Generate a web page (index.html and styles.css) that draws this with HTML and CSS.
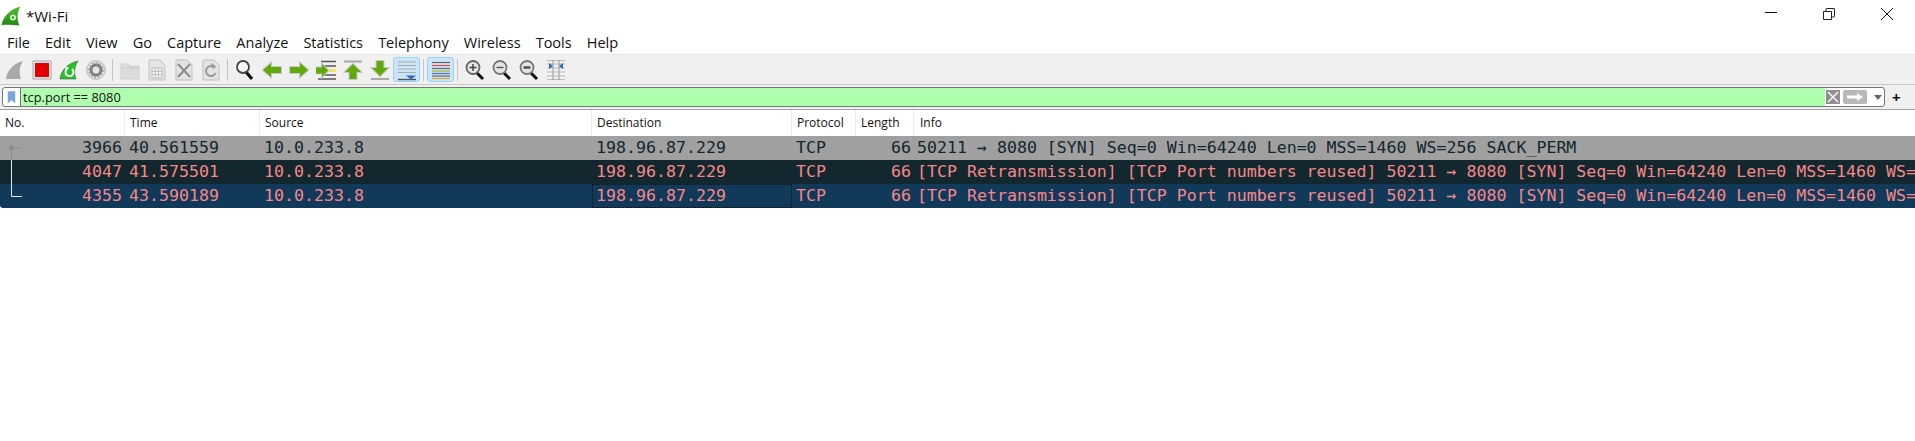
FILE: index.html
```html
<!doctype html>
<html>
<head>
	<meta charset="utf-8">
	<title>*Wi-Fi</title>
	<link rel="stylesheet" href="styles.css">
</head>
<body>
	<div class="titlebar">
		<svg class="appicon" viewBox="0 0 20 20">
			<defs>
				<linearGradient id="fin" x1="0" y1="0" x2="0" y2="1">
					<stop offset="0" stop-color="#55c030"/>
					<stop offset="1" stop-color="#1f8a0c"/>
				</linearGradient>
			</defs>
			<path d="M0.5 19 C2 11 9 3 19.5 0.5 C16 6 15.5 13 18.5 19.5 C12 18.5 6 18.5 0.5 19 Z" fill="url(#fin)"/>
			<circle cx="12" cy="11.5" r="3" fill="#d8f0d0"/>
			<circle cx="12" cy="11.5" r="1.2" fill="#2f9e12"/>
		</svg>
		<span class="wintitle">*Wi-Fi</span>
		<div class="winbtns">
			<svg viewBox="0 0 14 14"><path d="M1 5.5 H13" stroke="#111" fill="none"/></svg>
			<svg viewBox="0 0 14 14"><path d="M1.5 4.5 H9.5 V12.5 H1.5 Z M4 4.5 V2 Q4 1.5 4.5 1.5 H12 Q12.5 1.5 12.5 2 V9.5 Q12.5 10 12 10 H9.5" stroke="#222" fill="none"/></svg>
			<svg viewBox="0 0 14 14"><path d="M1 1 L13 13 M13 1 L1 13" stroke="#111" fill="none"/></svg>
		</div>
	</div>

	<div class="menubar">
		<span>File</span>
		<span>Edit</span>
		<span>View</span>
		<span>Go</span>
		<span>Capture</span>
		<span>Analyze</span>
		<span>Statistics</span>
		<span>Telephony</span>
		<span>Wireless</span>
		<span>Tools</span>
		<span>Help</span>
	</div>

	<div class="toolbar">
		<div class="tool"><svg viewBox="0 0 20 22"><path d="M1 20 C2 11 9 4 18 2 C14 8 14 14 16 20 Z" fill="#a9a9a9"/></svg></div>
		<div class="tool"><svg viewBox="0 0 20 22"><rect x="1" y="2" width="18" height="18" fill="#e8e8e8" stroke="#a8a8a8"/><rect x="3" y="4" width="14" height="14" fill="#e40000"/></svg></div>
		<div class="tool"><svg viewBox="0 0 20 22"><path d="M1 20 C2 11 9 4 19 2 C15 8 15 14 17 20 Z" fill="#22c522" stroke="#555" stroke-width=".6"/><path d="M13 10 A4 4 0 1 1 8 10" fill="none" stroke="#fff" stroke-width="2"/><path d="M6 7 L10 9 L7 12 Z" fill="#fff"/></svg></div>
		<div class="tool"><svg viewBox="0 0 20 22"><circle cx="10" cy="11" r="9.3" fill="#e6e6e6" stroke="#b0b0b0"/><circle cx="10" cy="11" r="5" fill="none" stroke="#808080" stroke-width="3"/><circle cx="10" cy="11" r="7" fill="none" stroke="#999" stroke-width="1.4" stroke-dasharray="2 1.6"/></svg></div>
		<i class="sep"></i>
		<div class="tool"><svg viewBox="0 0 20 22"><path d="M1 5 H8 L10 7 H19 V20 H1 Z" fill="#dcdcdc" stroke="#cfcfcf"/><path d="M1 9 H19" stroke="#c8c8c8"/></svg></div>
		<div class="tool"><svg viewBox="0 0 20 22"><path d="M2 1 H13 L18 6 V21 H2 Z" fill="#e4e4e4" stroke="#c4c4c4"/><path d="M5 9 H15 V19 H5 Z M5 12.3 H15 M5 15.6 H15 M8.3 9 V19 M11.6 9 V19" fill="#f4f4f4" stroke="#bbb"/></svg></div>
		<div class="tool"><svg viewBox="0 0 20 22"><path d="M2 1 H13 L18 6 V21 H2 Z" fill="#e4e4e4" stroke="#bdbdbd"/><path d="M4 5 L16 18 M16 5 L4 18" stroke="#8e8e8e" stroke-width="2.2"/></svg></div>
		<div class="tool"><svg viewBox="0 0 20 22"><path d="M2 1 H13 L18 6 V21 H2 Z" fill="#e4e4e4" stroke="#c0c0c0"/><path d="M14 9 A5 5 0 1 0 14.5 14" fill="none" stroke="#9a9a9a" stroke-width="2"/><path d="M10 4 L15 7 L11 10 Z" fill="#9a9a9a"/></svg></div>
		<i class="sep"></i>
		<div class="tool"><svg viewBox="0 0 20 22"><path d="M11 13 L17 20" stroke="#111" stroke-width="3.2"/><circle cx="8" cy="8" r="6" fill="#f2f6f6" stroke="#444" stroke-width="1.8"/></svg></div>
		<div class="tool"><svg viewBox="0 0 20 22"><path class="arrow" d="M1 11 L9 4 V8 H19 V14 H9 V18 Z"/></svg></div>
		<div class="tool"><svg viewBox="0 0 20 22"><path class="arrow" d="M19 11 L11 4 V8 H1 V14 H11 V18 Z"/></svg></div>
		<div class="tool"><svg viewBox="0 0 20 22"><path d="M5 2.5 H20 M8 7 H20 M8 16 H20 M2 20 H20" stroke="#555" stroke-width="1.6"/><rect x="11" y="10" width="9" height="3" fill="#f5e56b"/><path class="arrow" d="M12 11.5 L6 5 V8.5 H0 V14.5 H6 V18 Z"/></svg></div>
		<div class="tool"><svg viewBox="0 0 20 22"><path d="M1 2.5 H19" stroke="#a8a8a8" stroke-width="2"/><path class="arrow" d="M10 5 L18 13 H13.5 V20 H6.5 V13 H2 Z"/></svg></div>
		<div class="tool"><svg viewBox="0 0 20 22"><path d="M1 20 H19" stroke="#a8a8a8" stroke-width="2"/><path class="arrow" d="M10 17 L18 9 H13.5 V2 H6.5 V9 H2 Z"/></svg></div>
		<div class="tool on"><svg viewBox="0 0 20 22"><path d="M1 3 H19 M1 6.5 H19 M1 10 H19 M1 13.5 H19" stroke="#aaa" stroke-width="1.2"/><path d="M1 20.5 H19" stroke="#555" stroke-width="1.4"/><path d="M9 16.5 H19 L14 20.5 Z" fill="#2f6cb5"/></svg></div>
		<i class="sep"></i>
		<div class="tool on"><svg viewBox="0 0 20 22"><path d="M1 3.5 H19" stroke="#666" stroke-width="1.2"/><path d="M1 6.5 H19" stroke="#e04a4a" stroke-width="1.2"/><path d="M1 9.5 H19" stroke="#666" stroke-width="1.2"/><path d="M1 12 H19" stroke="#9ab832" stroke-width="1.2"/><path d="M1 14.5 H19" stroke="#5a6fc0" stroke-width="1.2"/><path d="M1 17 H19" stroke="#666" stroke-width="1.2"/><path d="M1 19.5 H19" stroke="#d8b030" stroke-width="1.2"/></svg></div>
		<i class="sep"></i>
		<div class="tool"><svg viewBox="0 0 20 22"><path d="M12 14 L18 20" stroke="#111" stroke-width="3"/><circle cx="8" cy="8.5" r="6.5" fill="#e6e6e6" stroke="#666" stroke-width="1.8"/><path d="M4.5 8.5 H11.5 M8 5 V12" stroke="#444" stroke-width="1.5"/></svg></div>
		<div class="tool"><svg viewBox="0 0 20 22"><path d="M12 14 L18 20" stroke="#111" stroke-width="3"/><circle cx="8" cy="8.5" r="6.5" fill="#e6e6e6" stroke="#777" stroke-width="1.8"/><path d="M4.5 8.5 H11.5" stroke="#555" stroke-width="1.5"/></svg></div>
		<div class="tool"><svg viewBox="0 0 20 22"><path d="M12 14 L18 20" stroke="#111" stroke-width="3"/><circle cx="8" cy="8.5" r="6.5" fill="#e6e6e6" stroke="#777" stroke-width="1.8"/><path d="M4.5 8.5 H11.5" stroke="#555" stroke-width="2.6"/></svg></div>
		<div class="tool"><svg viewBox="0 0 20 22"><path d="M1 1.5 H19 M1 20.5 H19 M1 5 H19 M1 9 H19 M1 13 H19 M1 17 H19" stroke="#bbb" stroke-width="1.1"/><path d="M7 1 V21 M13 1 V21" stroke="#999"/><path d="M3 4 L7 7 L3 10 Z M17 4 L13 7 L17 10 Z" fill="#2f6cb5"/></svg></div>
	</div>

	<div class="filterrow">
		<div class="filter">
			<div class="bookmark"><svg viewBox="0 0 12 17"><path d="M1 0 H11 V16 L6 12 L1 16 Z" fill="#7aa5db"/></svg></div>
			<div class="expr">tcp.port == 8080</div>
			<div class="filterbtns">
				<svg class="clear" viewBox="0 0 14 14"><rect width="14" height="14" fill="#909090"/><path d="M2 2 L12 12 M12 2 L2 12" stroke="#fff" stroke-width="1.4"/></svg>
				<svg class="apply" viewBox="0 0 24 14"><rect width="24" height="14" rx="2" fill="#b8b8b8"/><path d="M4 5.5 H14 V3 L20 7 L14 11 V8.5 H4 Z" fill="#fff"/></svg>
				<svg class="drop" viewBox="0 0 8 5"><path d="M0 0 H8 L4 5 Z" fill="#666"/></svg>
			</div>
		</div>
		<span class="plus">+</span>
	</div>

	<div class="head cols">
		<div>No.</div>
		<div>Time</div>
		<div>Source</div>
		<div>Destination</div>
		<div>Protocol</div>
		<div>Length</div>
		<div class="info">Info</div>
	</div>

	<div class="packets">
		<svg class="related" viewBox="0 0 24 72">
			<path d="M11.5 24 V60.5 H22" fill="none" stroke="#e8e8e8"/>
			<path d="M11.5 24 V12 H22" fill="none" stroke="#8c8c8c"/>
			<circle cx="11.5" cy="12" r="2.5" fill="#8a8a8a"/>
		</svg>
		<div class="row cols first">
			<div class="num">3966</div>
			<div>40.561559</div>
			<div>10.0.233.8</div>
			<div>198.96.87.229</div>
			<div>TCP</div>
			<div class="num">66</div>
			<div class="info">50211 → 8080 [SYN] Seq=0 Win=64240 Len=0 MSS=1460 WS=256 SACK_PERM</div>
		</div>
		<div class="row cols bad">
			<div class="num">4047</div>
			<div>41.575501</div>
			<div>10.0.233.8</div>
			<div>198.96.87.229</div>
			<div>TCP</div>
			<div class="num">66</div>
			<div class="info">[TCP Retransmission] [TCP Port numbers reused] 50211 → 8080 [SYN] Seq=0 Win=64240 Len=0 MSS=1460 WS=256 SACK_PERM</div>
		</div>
		<div class="row cols bad current">
			<div class="num">4355</div>
			<div>43.590189</div>
			<div>10.0.233.8</div>
			<div class="focus">198.96.87.229</div>
			<div>TCP</div>
			<div class="num">66</div>
			<div class="info">[TCP Retransmission] [TCP Port numbers reused] 50211 → 8080 [SYN] Seq=0 Win=64240 Len=0 MSS=1460 WS=256 SACK_PERM</div>
		</div>
	</div>
</body>
</html>
```

FILE: styles.css
```css
html,
body {
	margin: 0;
	height: 100%;
	overflow: hidden;
	background: #fff;
	font-family: "Open Sans", "Liberation Sans", sans-serif;
	color: #111;
}

.titlebar {
	display: flex;
	align-items: center;
	height: 31px;
}

.appicon {
	width: 20px;
	height: 20px;
	margin-left: 1px;
}

.wintitle {
	margin-left: 5px;
	font-size: 15px;
}

.winbtns {
	display: flex;
	margin-left: auto;
	margin-right: 21px;
	gap: 44px;
	margin-top: -3px;
}

.winbtns svg {
	width: 14px;
	height: 14px;
}

.menubar {
	display: flex;
	height: 23px;
	padding-left: 7px;
	gap: 15.1px;
	align-items: center;
	font-size: 14.5px;
	border-bottom: 1px solid #e6e6e6;
}

.toolbar {
	display: flex;
	align-items: center;
	height: 29px;
	padding-left: 1px;
	background: #f0f0f0;
	border-bottom: 1px solid #c8c8c8;
}

.tool {
	display: flex;
	align-items: center;
	justify-content: center;
	box-sizing: border-box;
	width: 27px;
	height: 25px;
}

.tool svg {
	width: 20px;
	height: 22px;
}

.tool .arrow {
	fill: #62aa0c;
	stroke: #c9c9c9;
	stroke-width: 2;
	paint-order: stroke;
}

.tool.on {
	background: #cce4f7;
	border: 1px solid #99d1ff;
	border-radius: 3px;
}

.sep {
	width: 1px;
	height: 22px;
	margin: 0 3px;
	background: #c6c6c6;
}

.filterrow {
	display: flex;
	align-items: flex-start;
	box-sizing: border-box;
	height: 24px;
	padding: 2px 0 0 2px;
	background: #f0f0f0;
}

.filter {
	display: flex;
	box-sizing: border-box;
	width: 1883px;
	height: 20px;
	border: 1px solid #767676;
	border-radius: 3px;
	background: #fff;
	overflow: hidden;
}

.bookmark {
	display: flex;
	align-items: center;
	justify-content: center;
	width: 17px;
	border-right: 1px solid #767676;
}

.bookmark svg {
	width: 9px;
	height: 15px;
}

.expr {
	flex: 1;
	padding-left: 2px;
	background: #afffaf;
	font-size: 12.8px;
	line-height: 18px;
}

.filterbtns {
	display: flex;
	align-items: center;
	width: 59px;
	padding-left: 1px;
	box-sizing: border-box;
}

.clear {
	width: 14px;
	height: 14px;
}

.apply {
	width: 24px;
	height: 14px;
	margin-left: 3px;
}

.drop {
	width: 8px;
	height: 5px;
	margin-left: 7px;
}

.plus {
	margin-left: 7px;
	font-size: 15px;
	line-height: 20px;
	font-weight: 700;
}

.cols {
	display: grid;
	grid-template-columns: 125px 135px 332px 200px 64px 58px 1fr;
}

.head {
	height: 27px;
	border-top: 1px solid #a0a0a0;
	box-sizing: border-box;
	font-size: 12px;
	line-height: 26px;
}

.head div {
	padding-left: 5px;
	border-right: 1px solid #ececec;
}

.head .info {
	padding-left: 6px;
	border-right: 0;
}

.packets {
	position: relative;
}

.related {
	position: absolute;
	left: 0;
	top: 0;
	width: 24px;
	height: 72px;
}

.row {
	height: 24px;
	line-height: 24px;
	font-family: "DejaVu Sans Mono", "Liberation Mono", monospace;
	font-size: 16.6px;
	white-space: nowrap;
}

.row div {
	padding: 0 3px 0 4px;
	overflow: hidden;
}

.row .num {
	text-align: right;
}

.row .info {
	padding-left: 3px;
	padding-right: 0;
}

.first {
	background: #a0a0a0;
	color: #12272e;
}

.bad {
	background: #12272e;
	color: #f78787;
}

.current {
	background: #10395a;
	border-radius: 0 0 0 3px;
}

.row .focus {
	outline: 1px dotted #0b0b0b;
	outline-offset: -1px;
}
```
